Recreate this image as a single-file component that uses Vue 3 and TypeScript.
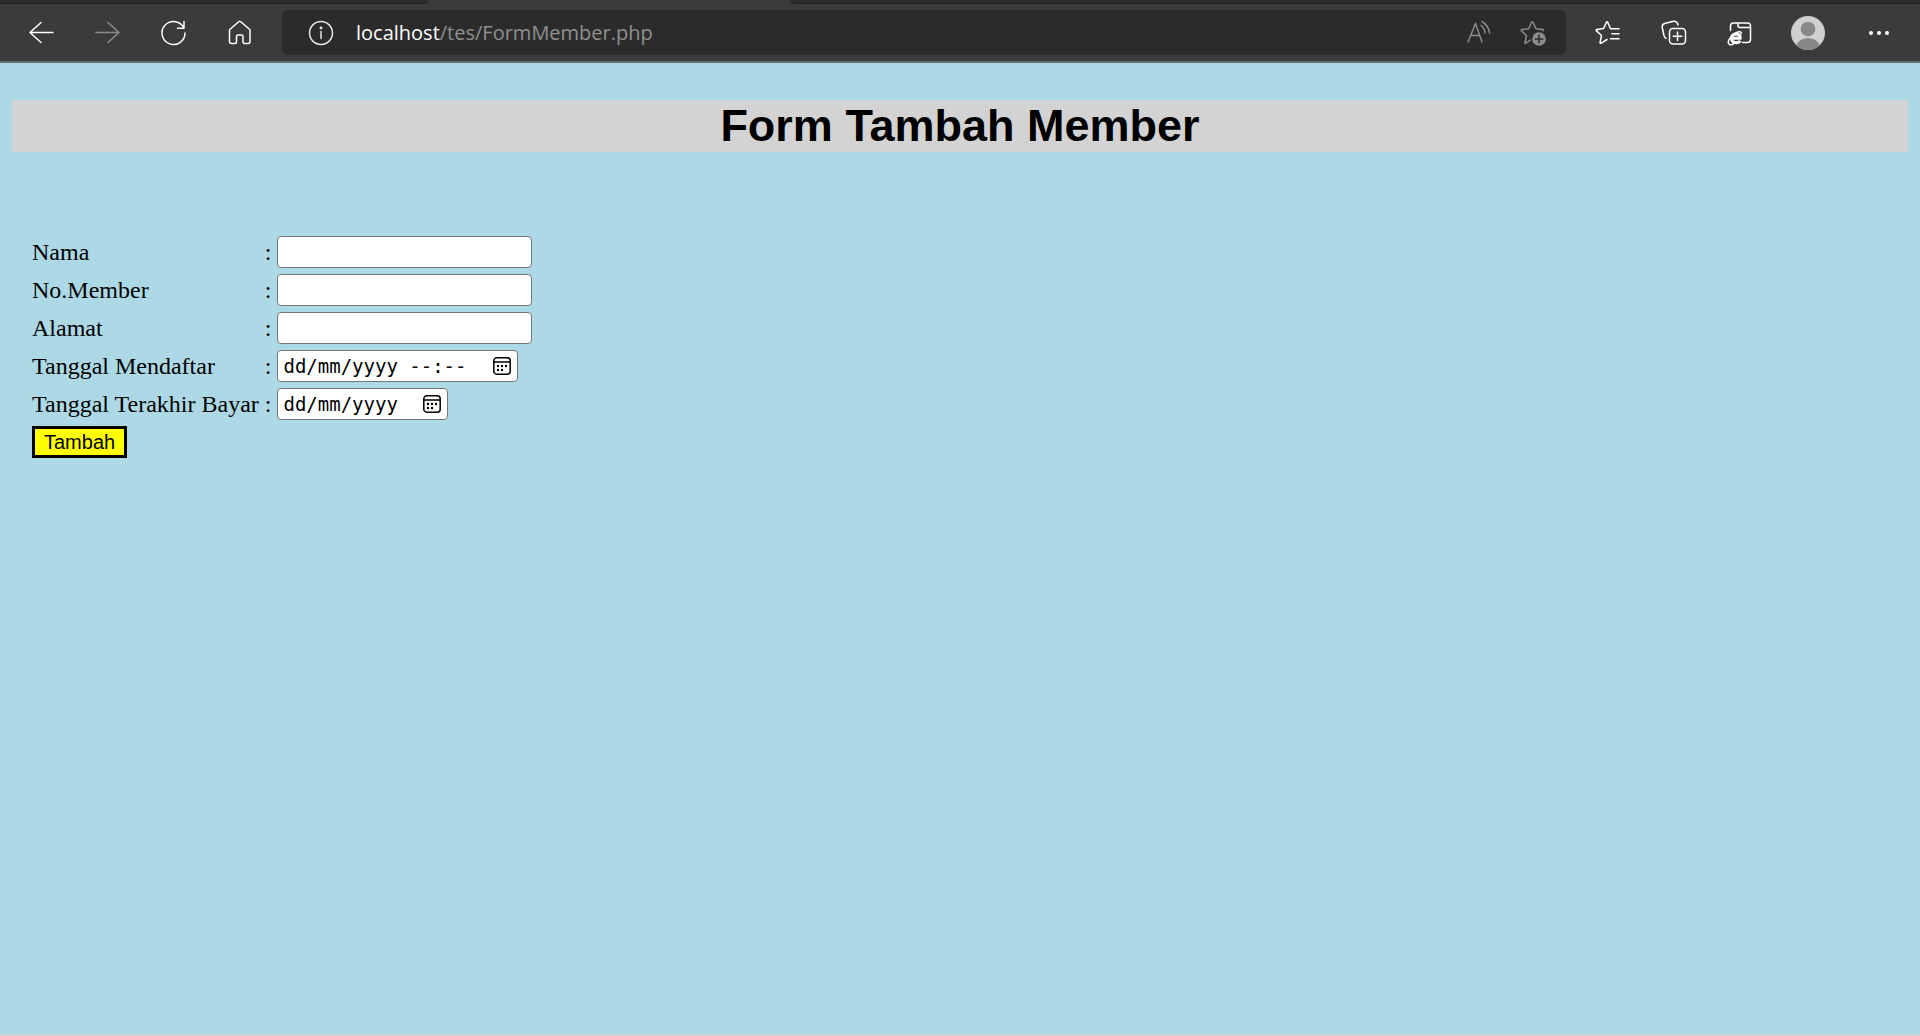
<script setup lang="ts">
import { ref } from 'vue'

interface Field {
  id: string
  label: string
  kind: 'text' | 'datetime' | 'date'
  hint: string
}

const fields: Field[] = [
  { id: 'nama', label: 'Nama', kind: 'text', hint: '' },
  { id: 'nomor', label: 'No.Member', kind: 'text', hint: '' },
  { id: 'alamat', label: 'Alamat', kind: 'text', hint: '' },
  { id: 'mendaftar', label: 'Tanggal Mendaftar', kind: 'datetime', hint: 'dd/mm/yyyy --:--' },
  { id: 'bayar', label: 'Tanggal Terakhir Bayar', kind: 'date', hint: 'dd/mm/yyyy' },
]

const values = ref<Record<string, string>>({})
</script>

<template>
  <div class="window">
    <header class="chrome">
      <div class="tabs">
        <div class="tab-rest left"></div>
        <div class="tab-active"></div>
        <div class="tab-rest right"></div>
      </div>
      <nav class="toolbar">
        <button class="tool" type="button" aria-label="Back">
          <svg width="28" height="28" viewBox="0 0 28 28"><path d="M26 13.500H3M14 3.500L3 13.500l11 10" /></svg>
        </button>
        <button class="tool dim" type="button" aria-label="Forward">
          <svg width="28" height="28" viewBox="0 0 28 28"><path d="M3 13.500h23M15 3.500L26 13.500 15 23.500" /></svg>
        </button>
        <button class="tool" type="button" aria-label="Refresh">
          <svg width="28" height="28" viewBox="0 0 28 28"><path d="M25 9.300A11.500 11.500 0 1 0 26 14M25 2.500V9.300H18.500" /></svg>
        </button>
        <button class="tool" type="button" aria-label="Home">
          <svg width="28" height="28" viewBox="0 0 28 28"><path d="M4.500 11.500Q4.500 10.800 5 10.300L14 2.500Q14.700 1.900 15.400 2.500L24.500 10.300Q25 10.800 25 11.500V22.500Q25 24.500 23 24.500H19.500Q18 24.500 18 23V17.500Q18 16 16.500 16H13Q11.500 16 11.500 17.500V23Q11.500 24.500 10 24.500H6.500Q4.500 24.500 4.500 22.500Z" /></svg>
        </button>

        <div class="address">
          <button class="inner info" type="button" aria-label="Site information">
            <svg width="28" height="28" viewBox="0 0 28 28"><circle cx="14" cy="14" r="11.500" /><path d="M14 12.500V19.500" /><circle class="solid" cx="14" cy="9" r="1.400" /></svg>
          </button>
          <a class="url" href="#"><span class="host">localhost</span>/tes/FormMember.php</a>
          <button class="inner dim" type="button" aria-label="Read aloud">
            <svg width="28" height="28" viewBox="0 0 28 28"><path d="M3 23L10.500 4.500L17 23M5.500 16.500H14.500M16 6.500Q19.500 9 20 14M17 2.500Q23.500 6.500 24.500 14" /></svg>
          </button>
          <button class="inner dim" type="button" aria-label="Add to favorites">
            <svg width="28" height="28" viewBox="0 0 28 28"><path d="M11 21.300L6.800 24.200Q5.800 24.500 6 23.500L7.500 16.500L2.300 11.600Q1.900 10.700 2.900 10.500L9.700 9.700L12.600 3.300Q13.300 2.300 14 3.300L16.900 9.700L23.700 10.500Q24.700 10.800 24.200 11.700" /><circle class="solid" cx="20" cy="20" r="6.800" /><path class="cut" d="M20 16.200V23.800M16.200 20H23.800" /></svg>
          </button>
        </div>

        <button class="tool" type="button" aria-label="Favorites">
          <svg width="28" height="28" viewBox="0 0 28 28"><path d="M14 20.500L8.200 24.200Q6.800 24.700 7.100 23.300L8.500 16.500L3.300 11.600Q2.700 10.600 4 10.400L10.500 9.600L13.400 3.300Q14 2.300 14.700 3.300L17.500 9.800M17.500 9.800H26M19 14.800H26M17.500 19.800H26" /></svg>
        </button>
        <button class="tool" type="button" aria-label="Collections">
          <svg width="28" height="28" viewBox="0 0 28 28"><rect x="10.500" y="9.500" width="16" height="15.500" rx="3.500" /><path d="M18.500 13V21.500M14.200 17.300H22.800M7 19.300Q5.500 18.500 5 16.500L3.200 8.500Q2.800 5.500 5.500 4.500L14.500 2.300Q17.500 1.800 18.700 4.500L19 6" /></svg>
        </button>
        <button class="tool" type="button" aria-label="Internet Explorer mode">
          <svg width="28" height="28" viewBox="0 0 28 28"><path d="M5.500 11.500V7Q5.500 4 8.500 4H22.500Q25.500 4 25.500 7V20.500Q25.500 23.500 22.500 23.500H17.500M13 4V6.500Q13 8.500 15 8.500H25.500" /><path class="thick" d="M6.500 19.300H15.300Q15.300 15 11 15Q6.500 15.300 6.500 19.500Q7 23.800 11 23.800Q14 23.800 15.200 21.800" /><path d="M4.500 25.500Q1.500 23.500 5.500 18.500Q9.500 13.200 14.500 12.800Q17 12.700 16 15M4.500 25.500Q6.500 26.500 9 24.500" /></svg>
        </button>
        <button class="tool profile" type="button" aria-label="Profile">
          <svg width="34" height="34" viewBox="0 0 34 34"><circle cx="17" cy="17" r="17" class="face-bg" /><circle cx="17" cy="13" r="7.300" class="face" /><path class="face" d="M5 29Q9 22 17 22T29 29Q24 34 17 34T5 29Z" /></svg>
        </button>
        <button class="tool more" type="button" aria-label="Settings and more">
          <svg width="28" height="28" viewBox="0 0 28 28"><circle class="solid" cx="6" cy="14" r="2" /><circle class="solid" cx="14" cy="14" r="2" /><circle class="solid" cx="22" cy="14" r="2" /></svg>
        </button>
      </nav>
    </header>

    <main class="page">
      <h1>Form Tambah Member</h1>
      <form @submit.prevent>
        <table>
          <tbody>
            <tr v-for="f in fields" :key="f.id">
              <td><label :for="f.id">{{ f.label }}</label></td>
              <td>:</td>
              <td>
                <input v-if="f.kind === 'text'" :id="f.id" v-model="values[f.id]" class="box text" type="text" />
                <div v-else class="box picker" :class="f.kind">
                  <input :id="f.id" v-model="values[f.id]" type="text" :placeholder="f.hint" />
                  <button type="button" :aria-label="'Pilih ' + f.label">
                    <svg width="20" height="20" viewBox="0 0 20 20">
                      <rect x="1.800" y="1.800" width="16.400" height="16.400" rx="3" />
                      <path d="M2 6H18" />
                      <g class="dots">
                        <circle cx="10" cy="10" r="1.200" /><circle cx="14" cy="10" r="1.200" /><circle cx="6" cy="10" r="1.200" />
                        <circle cx="6" cy="14" r="1.200" /><circle cx="10" cy="14" r="1.200" />
                      </g>
                    </svg>
                  </button>
                </div>
              </td>
            </tr>
            <tr>
              <td colspan="3"><button class="submit" type="submit">Tambah</button></td>
            </tr>
          </tbody>
        </table>
      </form>
    </main>
  </div>
</template>

<style>
html,
body,
#app {
  height: 100%;
}
body {
  margin: 0;
}
</style>

<style scoped>
.window {
  display: flex;
  flex-direction: column;
  min-height: 100%;
  background: #add8e6;
}
.chrome {
  background: #3b3b3b;
  border-bottom: 2px solid #636e72;
}
.tabs {
  display: flex;
  height: 4px;
}
.tab-rest {
  background: #2b2b2b;
  border-bottom: 1px solid #202020;
  box-sizing: border-box;
}
.tab-rest.left {
  width: 428px;
  border-bottom-right-radius: 4px;
}
.tab-active {
  width: 362px;
}
.tab-rest.right {
  flex: 1;
  border-bottom-left-radius: 4px;
}
.toolbar {
  display: flex;
  align-items: center;
  height: 57px;
  padding: 0 6px 0 8px;
}
button {
  font: inherit;
  cursor: pointer;
}
.tool,
.inner {
  display: flex;
  align-items: center;
  justify-content: center;
  flex: none;
  height: 45px;
  padding: 0;
  border: 0;
  background: none;
  color: #fff;
}
.tool {
  width: 66px;
}
.profile {
  width: 72px;
}
.more {
  width: 70px;
}
.inner {
  width: 54px;
}
.info {
  width: 74px;
  padding-left: 4px;
}
.dim {
  color: #8c8c8c;
}
svg {
  display: block;
  fill: none;
  stroke: currentColor;
  stroke-width: 1.500;
  stroke-linecap: round;
  stroke-linejoin: round;
}
.solid {
  fill: currentColor;
  stroke: none;
}
.thick {
  stroke-width: 3;
  stroke-linecap: butt;
}
.cut {
  stroke: #2b2b2b;
}
.face-bg {
  fill: #d2d0ce;
  stroke: none;
}
.face {
  fill: #8a8886;
  stroke: none;
}
.address {
  display: flex;
  align-items: center;
  flex: 1;
  min-width: 0;
  height: 45px;
  margin: 0 8px 0 10px;
  padding-right: 6px;
  box-sizing: border-box;
  border-radius: 6px;
  background: #2b2b2b;
}
.info {
  color: #e6e6e6;
}
.url {
  flex: 1;
  color: #8f8f8f;
  font: 20px/28px "Open Sans", "Noto Sans", sans-serif;
  text-decoration: none;
  white-space: nowrap;
}
.host {
  color: #fff;
}
.page {
  flex: 1;
  padding: 37px 12px 0;
  border-bottom: 2px solid #d3d3d3;
  font: 24px/28px "Liberation Serif", "Times New Roman", serif;
  color: #000;
}
h1 {
  margin: 0 0 81px;
  background: #d3d3d3;
  font: bold 45px/52px "Liberation Sans", Arial, sans-serif;
  text-align: center;
}
table {
  margin-left: 16px;
  border-collapse: collapse;
}
td {
  height: 38px;
  padding: 0 6px 0 4px;
  box-sizing: border-box;
}
td:nth-child(2),
td:nth-child(3) {
  padding-left: 0;
}
.box {
  display: flex;
  align-items: center;
  height: 32px;
  box-sizing: border-box;
  border: 1px solid #767676;
  border-radius: 4px;
  background: #fff;
}
.text {
  width: 255px;
  padding: 0 6px;
  font: 20px/28px "Liberation Sans", Arial, sans-serif;
}
.picker input {
  flex: 1;
  min-width: 0;
  padding: 0 0 0 5px;
  border: 0;
  outline: 0;
  background: none;
  color: #000;
  font: 19px/28px "DejaVu Sans Mono", monospace;
}
.picker input::placeholder {
  color: #000;
  opacity: 1;
}
.picker button {
  padding: 0;
  border: 0;
  margin-right: 5px;
  background: none;
  color: #000;
}
.dots {
  fill: #000;
  stroke: none;
}
.datetime {
  width: 241px;
}
.date {
  width: 171px;
}
.submit {
  display: block;
  height: 32px;
  padding: 0 9px;
  border: 3px solid #000;
  background: #ff0;
  color: #000;
  font: 20px/24px "Liberation Sans", Arial, sans-serif;
}
</style>
